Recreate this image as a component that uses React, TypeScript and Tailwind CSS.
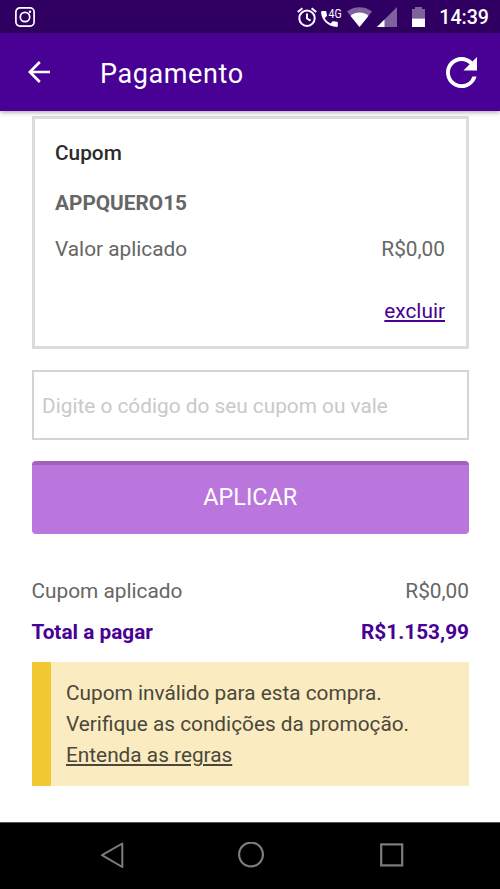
import type { ReactNode } from "react";

const message = ["Cupom inválido para esta compra.", "Verifique as condições da promoção."];

function StatusBar() {
  return (
    <div className="flex h-[33px] shrink-0 items-center bg-[#2f0062] pr-[11px] pl-[15px] text-white">
      <svg width="20" height="20" viewBox="0 0 20 20" fill="none" stroke="currentColor" strokeWidth="1.7">
        <rect x="0.9" y="0.9" width="18.2" height="18.2" rx="4" />
        <circle cx="10" cy="10" r="4.7" />
        <circle cx="15" cy="4.8" r="1.2" fill="currentColor" stroke="none" />
      </svg>

      <div className="ml-auto flex items-center">
        <svg width="20" height="20" viewBox="0 0 20 20" fill="none" stroke="currentColor" strokeWidth="2">
          <circle cx="10" cy="11.2" r="7.7" />
          <path d="M10 6.5v5l3.6 2.2M.8 5.1 5.4 1.3M19.2 5.1l-4.6-3.8" />
        </svg>
        <svg className="ml-[4px]" width="22" height="20" viewBox="0 0 22 20" fill="currentColor">
          <path d="M1 4h3.4c.5 0 .9.4 1 .9.1 1.2.3 2.3.6 3.3.1.4 0 .8-.3 1l-2.1 2.1a15 15 0 0 0 5.8 5.3l2-2.1c.3-.3.7-.4 1-.2 1.1.3 2.2.5 3.4.5.6 0 1 .4 1 1V19c0 .5-.4.9-1 .9C7.5 19.9.1 13 .1 5c0-.6.4-1 .9-1z" />
          <text x="7.600" y="10.800" fontSize="12.500" fontFamily="Roboto, sans-serif" textLength="13.200" lengthAdjust="spacingAndGlyphs">4G</text>
        </svg>
        <svg className="ml-[4px]" width="25" height="20" viewBox="0 0 25 20" fill="currentColor">
          <path d="M12.5 20 0 4.5C7-1.2 18-1.2 25 4.5z" opacity=".38" />
          <path d="M12.5 20 3.600 8.900c5-4.400 12.800-4.400 17.800 0z" />
        </svg>
        <svg className="ml-[5px]" width="20" height="20" viewBox="0 0 20 20" fill="currentColor">
          <path d="M0 20 20 0v20z" opacity=".38" />
          <path d="m0 20 7.500-7.500V20z" />
        </svg>
        <svg className="ml-[15px]" width="13" height="20" viewBox="0 0 13 20" fill="currentColor">
          <path d="M0 2h3V0h7v2h3v9.500H0z" opacity=".38" />
          <path d="M0 11.500h13V20H0z" />
        </svg>
        <span className="mt-[2px] ml-[14px] text-[19.6px] leading-none font-medium">14:39</span>
      </div>
    </div>
  );
}

function Header() {
  return (
    <header className="relative z-10 flex h-[78px] shrink-0 items-center bg-[#480095] pr-[23px] pl-[28px] text-white shadow-[0_1px_5px_rgba(0,0,0,0.4)]">
      <button aria-label="Voltar">
        <svg width="23" height="22" viewBox="0 0 23 22" fill="none" stroke="currentColor" strokeWidth="2.7">
          <path d="M22 11H2.5M11.8 1 1.9 11l9.9 10" />
        </svg>
      </button>
      <h1 className="mt-[5px] ml-[49px] text-[27px] leading-none tracking-[0.6px]">Pagamento</h1>
      <button aria-label="Atualizar" className="ml-auto">
        <svg width="31" height="31" viewBox="4 4 16 16" fill="currentColor">
          <path d="M17.650 6.350A7.958 7.958 0 0 0 12 4c-4.420 0-7.990 3.580-7.990 8s3.570 8 7.990 8c3.730 0 6.840-2.550 7.730-6h-2.080A5.990 5.990 0 0 1 12 18c-3.310 0-6-2.690-6-6s2.690-6 6-6c1.660 0 3.140.690 4.220 1.780L13 11h7V4l-2.350 2.350z" />
        </svg>
      </button>
    </header>
  );
}

function Row({ label, value, className }: { label: ReactNode; value: ReactNode; className: string }) {
  return (
    <div className={`flex justify-between ${className}`}>
      <span>{label}</span>
      <span>{value}</span>
    </div>
  );
}

function NavBar() {
  return (
    <nav className="flex h-[67px] shrink-0 items-center justify-between border-t border-[#555] bg-black pr-[96px] pb-[2px] pl-[100px] text-[#7d7d7d]">
      <svg width="25" height="27" viewBox="0 0 25 27" fill="none" stroke="currentColor" strokeWidth="2" strokeLinejoin="round">
        <path d="M22.3 1.500V25L2 13.200z" />
      </svg>
      <svg className="mr-[3px]" width="27" height="27" viewBox="0 0 27 27" fill="none" stroke="currentColor" strokeWidth="2.2">
        <circle cx="13" cy="12.500" r="11.900" />
      </svg>
      <svg width="24" height="24" viewBox="0 0 24 24" fill="none" stroke="currentColor" strokeWidth="2.2">
        <rect x="1.200" y="1.400" width="21" height="21" />
      </svg>
    </nav>
  );
}

export default function App() {
  return (
    <div className="flex h-[889px] w-[500px] flex-col overflow-hidden bg-white font-['Roboto',sans-serif] text-[20.8px] leading-6 text-[#666]">
      <StatusBar />
      <Header />

      <main className="flex flex-1 flex-col pt-[5px] pr-[31px] pl-[31.5px]">
        <section className="h-[233px] border-[3px] border-[#dcdcdc] pt-[22px] pr-[21px] pl-[20.5px]">
          <h2 className="font-medium text-[#2b2b2b]">Cupom</h2>
          <p className="mt-[26px] font-bold">APPQUERO15</p>
          <Row label="Valor aplicado" value="R$0,00" className="mt-[22px]" />
          <div className="mt-[38px] text-right">
            <a href="#" className="text-[#480095] underline">excluir</a>
          </div>
        </section>

        <input
          className="mt-[21px] h-[70px] w-full border-2 border-[#d4d4d4] px-[8.5px] pt-[2px] placeholder:text-[#c9c9c9] placeholder:opacity-100"
          placeholder="Digite o código do seu cupom ou vale"
        />
        <button className="mt-[21px] h-[73px] rounded-[4px] border-t-4 border-[#a062bb] bg-[#ba76dc] pb-[5px] text-[23.4px] text-white">
          APLICAR
        </button>

        <Row label="Cupom aplicado" value="R$0,00" className="mt-[45px]" />
        <Row label="Total a pagar" value="R$1.153,99" className="mt-[17px] font-bold text-[#480095]" />

        <div className="mt-[18px] h-[124px] border-l-[19px] border-[#f1c831] bg-[#faecc0] pt-[16px] pl-[15.5px] leading-[31px] text-[#4c473b]">
          {message.map((line) => (
            <p key={line}>{line}</p>
          ))}
          <a href="#" className="underline">Entenda as regras</a>
        </div>
      </main>

      <NavBar />
    </div>
  );
}
